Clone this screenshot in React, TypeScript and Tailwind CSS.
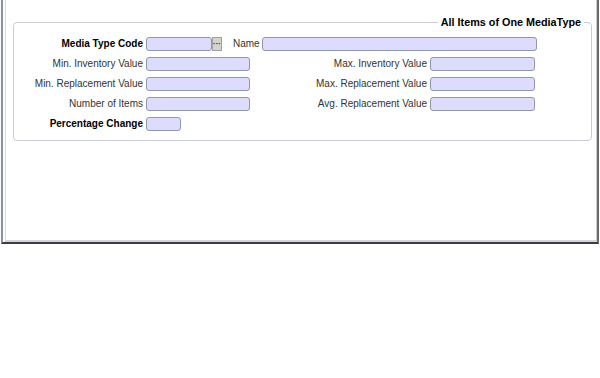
const font = { fontFamily: '"Liberation Sans", Arial, sans-serif' };

const Field = ({ w }: { w: string }) => (
  <div className={`${w} h-[14px] bg-[#dddcfd] border border-[#8f97ad] rounded-[3px]`} />
);

const Label = ({ text, bold, w }: { text: string; bold?: boolean; w: string }) => (
  <div
    className={`${w} shrink-0 text-right pr-[3px] text-[10px] leading-[14px] whitespace-nowrap ${
      bold ? "font-bold text-black" : "text-[#333]"
    }`}
  >
    {text}
  </div>
);

const rows = [
  ["Min. Inventory Value", "Max. Inventory Value"],
  ["Min. Replacement Value", "Max. Replacement Value"],
  ["Number of Items", "Avg. Replacement Value"],
];

export default function App() {
  return (
    <div className="w-[600px] h-[378px] bg-white" style={font}>
      <div className="ml-[1px] w-[598px] h-[244px] border-l-2 border-l-[#8a8ea6] border-r-2 border-r-[#6b6b6b] border-b-2 border-b-[#3c3c3c]">
        <div className="ml-[2px] h-full border-l border-l-[#dcdcdc] border-r border-r-[#c8c8c8] border-b-2 border-b-[#d4d6dc] pl-[7px] pt-[22px]">
          <div className="relative w-[579px] h-[119px] border border-[#c9cdd3] rounded-[4px] pt-[11px]">
            <div className="absolute right-[7px] top-[-8px] bg-white px-[3px] text-[10.8px] leading-[14px] font-bold text-black">
              All Items of One MediaType
            </div>
            <div className="flex items-center h-[20px]">
              <Label text="Media Type Code" bold w="w-[132px]" />
              <Field w="w-[66px]" />
              <div className="w-[10px] h-[14px] bg-[#d6d3cd] border border-[#a0a0a0] flex items-center justify-center text-[8px] leading-[8px] font-bold text-[#222]">
                ···
              </div>
              <div className="ml-[11px] w-[29px] text-[10px] leading-[14px] text-[#333]">Name</div>
              <Field w="w-[275px]" />
            </div>
            {rows.map(([l, r]) => (
              <div key={l} className="flex items-center h-[20px]">
                <Label text={l} w="w-[132px]" />
                <Field w="w-[104px]" />
                <Label text={r} w="w-[180px]" />
                <Field w="w-[105px]" />
              </div>
            ))}
            <div className="flex items-center h-[20px]">
              <Label text="Percentage Change" bold w="w-[132px]" />
              <Field w="w-[35px]" />
            </div>
          </div>
        </div>
      </div>
    </div>
  );
}
